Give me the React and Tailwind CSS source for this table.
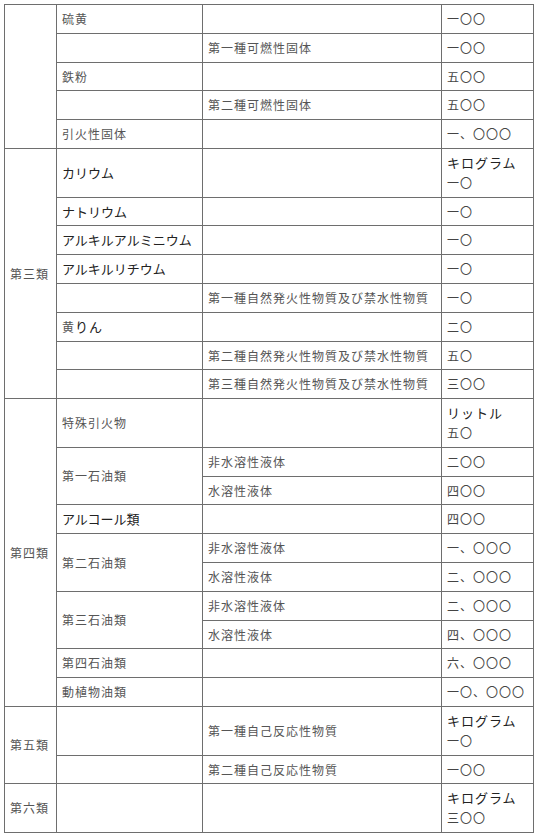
const kanji = 'text-[12px] tracking-[1px] text-[#555]';
const kana = 'text-[13px] text-[#222]';
const cell = 'border border-[#6e6e6e] pl-[5px] pr-[2px] py-[4px] leading-[19.8px] align-middle text-left';

function Td({ children, kind = 'kanji', rowSpan, className = '' }) {
  return (
    <td rowSpan={rowSpan} className={`${cell} ${kind === 'kana' ? kana : kanji} ${className}`}>
      {children}
    </td>
  );
}

function Amount({ unit, value }) {
  return (
    <Td kind="kanji">
      {unit ? <div className={kana}>{unit}</div> : null}
      <div className="text-[#444]">{value}</div>
    </Td>
  );
}

export default function App() {
  return (
    <div className="bg-white p-[4px]" style={{ fontFamily: '"Noto Sans CJK JP", "Noto Sans", sans-serif' }}>
      <table className="w-[529px] table-fixed border-collapse">
        <colgroup>
          <col className="w-[52px]" />
          <col className="w-[146px]" />
          <col className="w-[239px]" />
          <col className="w-[92px]" />
        </colgroup>
        <tbody>
          <tr>
            <Td rowSpan={5} />
            <Td>硫黄</Td>
            <Td />
            <Amount value="一〇〇" />
          </tr>
          <tr>
            <Td />
            <Td>第一種可燃性固体</Td>
            <Amount value="一〇〇" />
          </tr>
          <tr>
            <Td>鉄粉</Td>
            <Td />
            <Amount value="五〇〇" />
          </tr>
          <tr>
            <Td />
            <Td>第二種可燃性固体</Td>
            <Amount value="五〇〇" />
          </tr>
          <tr>
            <Td>引火性固体</Td>
            <Td />
            <Amount value="一、〇〇〇" />
          </tr>

          {/* 第三類 */}
          <tr>
            <Td rowSpan={8}>第三類</Td>
            <Td kind="kana">カリウム</Td>
            <Td />
            <Amount unit="キログラム" value="一〇" />
          </tr>
          <tr>
            <Td kind="kana">ナトリウム</Td>
            <Td />
            <Amount value="一〇" />
          </tr>
          <tr>
            <Td kind="kana">アルキルアルミニウム</Td>
            <Td />
            <Amount value="一〇" />
          </tr>
          <tr>
            <Td kind="kana">アルキルリチウム</Td>
            <Td />
            <Amount value="一〇" />
          </tr>
          <tr>
            <Td />
            <Td>第一種自然発火性物質及び禁水性物質</Td>
            <Amount value="一〇" />
          </tr>
          <tr>
            <Td>
              黄<span className={kana}>りん</span>
            </Td>
            <Td />
            <Amount value="二〇" />
          </tr>
          <tr>
            <Td />
            <Td>第二種自然発火性物質及び禁水性物質</Td>
            <Amount value="五〇" />
          </tr>
          <tr>
            <Td />
            <Td>第三種自然発火性物質及び禁水性物質</Td>
            <Amount value="三〇〇" />
          </tr>

          {/* 第四類 */}
          <tr>
            <Td rowSpan={10}>第四類</Td>
            <Td>特殊引火物</Td>
            <Td />
            <Amount unit="リットル" value="五〇" />
          </tr>
          <tr>
            <Td rowSpan={2}>第一石油類</Td>
            <Td>非水溶性液体</Td>
            <Amount value="二〇〇" />
          </tr>
          <tr>
            <Td>水溶性液体</Td>
            <Amount value="四〇〇" />
          </tr>
          <tr>
            <Td kind="kana">アルコール類</Td>
            <Td />
            <Amount value="四〇〇" />
          </tr>
          <tr>
            <Td rowSpan={2}>第二石油類</Td>
            <Td>非水溶性液体</Td>
            <Amount value="一、〇〇〇" />
          </tr>
          <tr>
            <Td>水溶性液体</Td>
            <Amount value="二、〇〇〇" />
          </tr>
          <tr>
            <Td rowSpan={2}>第三石油類</Td>
            <Td>非水溶性液体</Td>
            <Amount value="二、〇〇〇" />
          </tr>
          <tr>
            <Td>水溶性液体</Td>
            <Amount value="四、〇〇〇" />
          </tr>
          <tr>
            <Td>第四石油類</Td>
            <Td />
            <Amount value="六、〇〇〇" />
          </tr>
          <tr>
            <Td>動植物油類</Td>
            <Td />
            <Amount value="一〇、〇〇〇" />
          </tr>

          {/* 第五類 */}
          <tr>
            <Td rowSpan={2}>第五類</Td>
            <Td />
            <Td>第一種自己反応性物質</Td>
            <Amount unit="キログラム" value="一〇" />
          </tr>
          <tr>
            <Td />
            <Td>第二種自己反応性物質</Td>
            <Amount value="一〇〇" />
          </tr>

          {/* 第六類 */}
          <tr>
            <Td>第六類</Td>
            <Td />
            <Td />
            <Amount unit="キログラム" value="三〇〇" />
          </tr>
        </tbody>
      </table>
    </div>
  );
}
